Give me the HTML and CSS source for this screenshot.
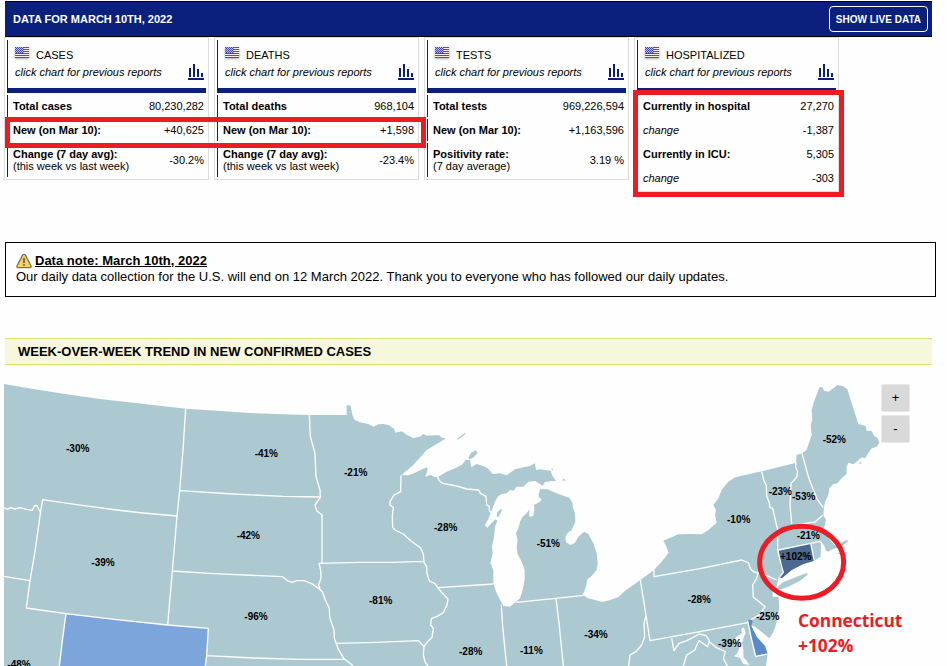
FILE: index.html
```html
<!DOCTYPE html>
<html lang="en">
<head>
<meta charset="utf-8">
<title>Data for March 10th, 2022</title>
<link rel="stylesheet" href="styles.css">
</head>
<body>
<svg class="defs" aria-hidden="true">
  <symbol id="flag" viewBox="0 0 14 11">
    <path fill="#f6eeee" d="M0 0h14v11H0z"/>
    <path stroke="#b5343a" d="M0 .5h14M0 2.5h14M0 4.5h14M0 6.5h14M0 8.500h14M0 10.500h14"/>
    <path fill="#4747a8" d="M0 0h9v7H0z"/>
    <path stroke="#b9b9e2" stroke-dasharray="1 1" d="M0 1.500h9M1 2.500h8M0 3.500h9M1 4.500h8M0 5.500h9M1 .5h8"/>
  </symbol>
  <symbol id="bars" viewBox="0 0 16 16">
    <path fill="#0b1f7c" d="M1 4h2v9H1zM5 0h2v13H5zM9 5h2v8H9zM13 9h2v4h-2zM0 14h16v2H0z"/>
  </symbol>
</svg>

<header class="topbar">
  <h1>DATA FOR MARCH 10TH, 2022</h1>
  <button type="button" class="live">SHOW LIVE DATA</button>
</header>

<main>
<section class="cards">
  <table class="card">
    <thead><tr><th colspan="2">
      <div class="name"><svg class="flag"><use href="#flag"/></svg>CASES</div>
      <div class="hint"><span>click chart for previous reports</span><svg class="bars"><use href="#bars"/></svg></div>
    </th></tr></thead>
    <tbody>
      <tr><th scope="row">Total cases</th><td>80,230,282</td></tr>
      <tr><th scope="row">New (on Mar 10):</th><td>+40,625</td></tr>
      <tr class="tall"><th scope="row">Change (7 day avg):<small>(this week vs last week)</small></th><td>-30.2%</td></tr>
    </tbody>
  </table>
  <table class="card">
    <thead><tr><th colspan="2">
      <div class="name"><svg class="flag"><use href="#flag"/></svg>DEATHS</div>
      <div class="hint"><span>click chart for previous reports</span><svg class="bars"><use href="#bars"/></svg></div>
    </th></tr></thead>
    <tbody>
      <tr><th scope="row">Total deaths</th><td>968,104</td></tr>
      <tr><th scope="row">New (on Mar 10):</th><td>+1,598</td></tr>
      <tr class="tall"><th scope="row">Change (7 day avg):<small>(this week vs last week)</small></th><td>-23.4%</td></tr>
    </tbody>
  </table>
  <table class="card">
    <thead><tr><th colspan="2">
      <div class="name"><svg class="flag"><use href="#flag"/></svg>TESTS</div>
      <div class="hint"><span>click chart for previous reports</span><svg class="bars"><use href="#bars"/></svg></div>
    </th></tr></thead>
    <tbody>
      <tr><th scope="row">Total tests</th><td>969,226,594</td></tr>
      <tr><th scope="row">New (on Mar 10):</th><td>+1,163,596</td></tr>
      <tr class="tall"><th scope="row">Positivity rate:<small>(7 day average)</small></th><td>3.19 %</td></tr>
    </tbody>
  </table>
  <table class="card">
    <thead><tr><th colspan="2">
      <div class="name"><svg class="flag"><use href="#flag"/></svg>HOSPITALIZED</div>
      <div class="hint"><span>click chart for previous reports</span><svg class="bars"><use href="#bars"/></svg></div>
    </th></tr></thead>
    <tbody>
      <tr><th scope="row">Currently in hospital</th><td>27,270</td></tr>
      <tr><th scope="row" class="delta">change</th><td>-1,387</td></tr>
      <tr><th scope="row">Currently in ICU:</th><td>5,305</td></tr>
      <tr><th scope="row" class="delta">change</th><td>-303</td></tr>
    </tbody>
  </table>
  <div class="mark mark-new"></div>
  <div class="mark mark-hospital"></div>
</section>

<section class="note">
  <h2><svg class="warn" viewBox="0 0 16 16"><path d="M8 1.300Q9 1.300 9.500 2.300L15 13Q15.500 14.700 14 14.700H2Q.5 14.700 1 13L6.500 2.300Q7 1.300 8 1.300z" fill="#fbd062" stroke="#777165" stroke-width="1.300"/><path d="M7.200 5h1.600v5H7.200zM7.200 11h1.600v1.800H7.200z" fill="#5e5a50"/></svg><span>Data note: March 10th, 2022</span></h2>
  <p>Our daily data collection for the U.S. will end on 12 March 2022. Thank you to everyone who has followed our daily updates.</p>
</section>

<h2 class="strip">WEEK-OVER-WEEK TREND IN NEW CONFIRMED CASES</h2>

<section class="map">
  <svg class="states" viewBox="0 0 2841 888" role="img" aria-label="Week-over-week trend by state">
    <g class="land">
      <path d="M12 888V42L100 57L200 73L300 87L400 98L557 116L650 122L750 129L850 133L925 135H1040V105L1052 107L1057 135L1064 150L1080 157L1105 162L1120 170L1135 163L1150 162L1165 165L1182 176L1186 188L1205 184L1222 196L1240 204L1260 200L1270 192L1280 197L1300 196L1318 196L1325 203L1338 205L1310 222L1280 240L1262 260L1240 285L1215 305L1205 316L1225 316L1245 308L1262 300L1280 292L1283 300L1276 321L1290 314L1305 322L1315 320L1340 305L1365 295L1385 285L1397 270L1410 270L1414 292L1430 282L1450 288L1463 295L1478 312L1500 310L1520 316L1545 298L1570 292L1590 288L1605 280L1608 300L1620 298L1635 300L1652 302L1656 316L1668 333L1650 334L1635 336L1628 347L1605 333L1585 335L1570 350L1550 350L1540 362L1530 360L1520 370L1505 372L1495 378L1485 395L1480 408L1472 430L1466 445L1454 466L1462 473L1478 455L1487 448L1492 452L1485 470L1482 500L1476 530L1478 550L1471 580L1480 600L1480 640L1488 665L1500 690L1510 708L1530 710L1548 695L1560 685L1568 660L1574 630L1574 600L1565 575L1552 550L1550 530L1553 510L1548 490L1555 475L1560 455L1568 440L1580 430L1588 418L1588 440L1600 438L1603 420L1602 405L1620 395L1625 388L1615 380L1620 358L1640 357L1670 370L1690 377L1708 383L1718 400L1718 410L1725 430L1726 455L1715 480L1702 490L1696 500L1698 517L1712 525L1725 518L1735 500L1752 485L1765 492L1780 520L1790 550L1793 580L1790 600L1775 618L1762 628L1758 650L1748 675L1765 685L1785 690L1808 696L1830 690L1855 682L1875 662L1900 645L1921 630L1962 600L1985 575L2006 548L1997 525L1990 512L2015 502L2035 493L2070 492L2105 493L2125 480L2150 458L2145 435L2148 420L2140 405L2155 385L2165 360L2185 335L2205 322L2285 304L2388 278L2390 255L2406 250L2420 240L2428 215L2435 195L2432 165L2437 150L2435 120L2442 95L2458 52L2468 52L2472 62L2485 65L2500 55L2512 45L2528 48L2542 58L2555 100L2575 162L2597 168L2600 182L2615 183L2622 197L2633 205L2638 218L2630 230L2615 235L2605 250L2595 265L2585 262L2578 268L2570 275L2560 283L2545 278L2540 290L2540 312L2525 325L2512 340L2500 342L2488 355L2485 375L2475 395L2472 412L2470 435L2478 450L2472 475L2475 490L2490 510L2503 525L2520 520L2538 511L2546 513L2535 522L2512 533L2498 537L2485 545L2478 542L2472 525L2463 517L2462 560L2443 572L2410 582L2375 600L2345 625L2336 620L2330 650L2318 665V680L2336 682L2338 710L2333 740L2325 775L2315 795L2308 805L2290 790L2265 770L2253 765L2270 800L2295 828L2303 852L2298 888Z"/>
      <path d="M2332 650L2350 636L2390 620L2422 608L2422 615L2400 632L2365 650L2345 657L2330 658Z"/>
      <path d="M1371 206L1395 189L1397 192L1373 209ZM1405 263L1413 248L1428 241L1433 250L1418 264L1408 267ZM1490 440L1492 426L1504 416L1506 420L1496 440ZM1653 294L1659 297L1657 302ZM1685 331L1692 326L1698 332ZM2577 280L2584 274L2582 282ZM2511 548L2522 551L2513 552Z"/>
    </g>
    <path class="rise" d="M198 733L350 749L503 765L625 775L616 888H178L188 800Z"/>
    <path class="connecticut" d="M2336 540L2432 520L2443 572L2410 582L2375 600L2345 625L2339 620L2350 607L2342 590Z"/>
    <path class="delaware" d="M2243 753L2251 747L2258 752L2254 769L2270 800L2295 828L2303 852L2267 859Z"/>
    <path class="water" d="M2232 772L2224 776L2226 790L2210 800L2200 812L2211 818L2218 835L2212 850L2202 859L2220 864L2230 882L2248 885L2240 872L2230 862V840L2226 818L2232 800L2237 788Z"/>
    <g class="borders">
      <path d="M557 116L549 240L539 362L531 438L517 603L503 765M128 389L230 404L350 420L430 429L531 438M128 389L121 430L105 545L90 632L79 714L198 731L350 749L503 765L625 775M198 731L188 805L178 888M625 775L620 857L616 888M12 413L22 418L32 413L45 417L60 413L80 418L97 421L103 408L110 406L122 428M12 619L90 632M539 362L700 372L850 379L960 381M517 603L640 611L848 620L862 632L877 637L890 632L912 632L935 641L958 657L967 665L976 690L988 715L989 742L1002 780L1003 805L1015 838L1032 866L1050 880L1060 888M620 857L760 864L900 868H1032M928 135L931 200L945 250L948 320L960 360L961 382L945 405L950 422L966 435V580M956 580L1080 577L1180 577L1270 574M957 580L962 600L963 625L956 645L960 657M1203 316L1202 365L1182 375L1170 395L1170 405L1180 412L1177 440L1178 472L1185 480L1210 492L1232 512L1262 534L1270 552L1272 578L1280 590L1281 610L1288 633L1305 641L1314 654L1326 668L1344 687L1341 705L1330 728L1310 740L1294 746L1292 765L1300 775L1296 802L1280 818L1272 830L1270 855L1276 878L1284 888M1008 820L1130 817L1255 812L1272 830M1315 653L1480 642M1312 320L1318 332L1328 340L1370 348L1400 357L1436 360L1441 370L1458 379L1460 405L1468 409L1468 422L1475 430M1504 706L1508 770L1514 830L1520 888M1548 697L1668 685L1750 676M1668 685L1678 768L1690 888M1921 630L1937 730L1950 812L2100 785L2243 758M1937 740L1932 760L1934 800L1925 825L1908 845L1890 855L1886 888M1962 600V620L2100 596L2225 570L2245 578L2252 597L2262 606L2274 608M2274 608L2270 625L2258 645L2260 682L2275 693L2295 710L2280 733L2260 745L2252 749M2274 608L2300 617L2330 630M2285 304L2291 330L2299 346L2300 378L2308 398L2310 413L2318 415L2333 480L2333 540L2345 590L2350 607L2340 620M2388 278L2387 292L2393 305L2390 322L2373 340L2370 405L2375 462M2333 480L2375 467L2445 456L2468 436M2406 250L2425 320L2450 385L2470 413M2336 540L2432 520L2460 514L2465 520M2432 520L2443 572M2243 753L2254 805L2267 859L2303 852M2015 805L2022 842L2037 820L2060 812L2078 803L2098 792L2118 797L2128 812L2123 830L2098 812L2090 825L2085 840L2060 855L2050 888M2128 815L2148 832L2176 845L2170 865L2182 888M2345 625L2331 652"/>
    </g>
    <g class="labels">
      <text x="198" y="246">-30%</text><text x="764" y="261">-41%</text><text x="1032" y="318">-21%</text>
      <text x="710" y="507">-42%</text><text x="274" y="588">-39%</text><text x="1302" y="483">-28%</text>
      <text x="1610" y="531">-51%</text><text x="733" y="750">-96%</text><text x="1107" y="702">-81%</text>
      <text x="22" y="895">-48%</text><text x="1377" y="855">-28%</text><text x="1560" y="852">-11%</text>
      <text x="1753" y="804">-34%</text><text x="2063" y="699">-28%</text><text x="2181" y="459">-10%</text>
      <text x="2306" y="375">-23%</text><text x="2376" y="390">-53%</text><text x="2468" y="219">-52%</text>
      <text x="2390" y="507">-21%</text><text x="2340" y="570">+102%</text><text x="2268" y="750">-25%</text>
      <text x="2154" y="831">-39%</text>
    </g>
    <ellipse class="ring" cx="2405" cy="577" rx="126" ry="108"/>
    <text class="callout" x="2394" y="770">Connecticut</text>
    <text class="callout" x="2394" y="846">+102%</text>
  </svg>
  <div class="zoom">
    <button type="button" aria-label="Zoom in">+</button>
    <button type="button" aria-label="Zoom out">-</button>
  </div>
</section>
</main>
</body>
</html>
```
FILE: styles.css
```css
* { box-sizing: border-box; }
body {
  margin: 0;
  background: #fefefe;
  color: #000;
  font: 11px/12px "Liberation Sans", Arial, sans-serif;
}
h1, h2, p { margin: 0; }
.defs { position: absolute; width: 0; height: 0; }

.topbar {
  display: flex;
  align-items: center;
  justify-content: space-between;
  height: 36px;
  margin: 1px 15px 0 5px;
  padding: 0 4px 0 8px;
  border: solid #000;
  border-width: 1px 0;
  background: #0b1f7c;
  color: #fff;
}
.topbar h1 { font-size: 11px; }
.live {
  height: 26px;
  padding: 0 6px;
  border: 1px solid #fff;
  border-radius: 4px;
  background: none;
  color: #fff;
  font: bold 10px "Liberation Sans", Arial, sans-serif;
}

.cards {
  position: relative;
  display: flex;
  align-items: flex-start;
  gap: 5px;
  min-height: 205px;
  padding-left: 4px;
}
.card {
  width: 205px;
  border: 1px solid #ddd;
  border-collapse: separate;
  border-spacing: 2px;
}
.card th, .card td { padding: 0 2px 0 5px; }
.card th { border-left: 1px solid #0b1f7c; text-align: left; }
.card td { padding-left: 0; text-align: right; }
.card tbody tr { height: 22px; }
.card tbody tr.tall { height: 34px; }
.card small { display: block; font-size: 11px; font-weight: normal; }
.card .delta { font-weight: normal; font-style: italic; }
.card thead th {
  height: 53px;
  padding: 6px 2px 0 7px;
  border-bottom: 5px solid #0b1f7c;
  font-weight: normal;
  vertical-align: top;
}
.name { display: flex; gap: 7px; line-height: 18px; }
.flag { width: 14px; height: 11px; margin-top: 1px; filter: drop-shadow(0 1px 1px #aaa); }
.hint { display: flex; justify-content: space-between; font-style: italic; line-height: 16px; }
.bars { width: 16px; height: 16px; }

.mark { position: absolute; border: 5px solid #ed1c24; }
.mark-new { left: 5px; top: 80px; width: 421px; height: 31px; }
.mark-hospital { left: 633px; top: 53px; width: 211px; height: 107px; }

.note {
  min-height: 55px;
  margin: 0 11px 0 5px;
  padding: 10px;
  border: 1px solid #000;
  font-size: 13px;
  line-height: 16px;
}
.note h2 { display: flex; gap: 3px; font-size: 13px; text-decoration: underline; }
.warn { width: 16px; height: 16px; }

.strip {
  margin: 41px 15px 5px 5px;
  padding: 0 13px;
  border: solid #dde070;
  border-width: 1px 0;
  background: #f7f7dc;
  font-size: 13px;
  line-height: 25px;
}

.map { position: relative; }
.states { display: block; width: 100%; height: auto; }
.land { fill: #acc9d1; }
.rise { fill: #7ca5dc; }
.delaware { fill: #5a8ac8; }
.connecticut { fill: #4a6890; }
.water { fill: #fefefe; }
.borders { fill: none; stroke: #fefefe; stroke-width: 4px; stroke-linejoin: round; }
.labels { font-size: 30px; font-weight: bold; }
.ring { fill: none; stroke: #ed1c24; stroke-width: 15px; }
.callout { fill: #ed1c24; font: bold 52px "Open Sans", "Noto Sans", sans-serif; }
.zoom {
  position: absolute;
  top: 14px;
  right: 37px;
  display: grid;
  gap: 3px;
}
.zoom button {
  width: 29px;
  height: 28px;
  padding: 0 0 2px;
  border: 1px solid #e8e8e8;
  border-radius: 2px;
  background: #d9d9d9;
  color: #000;
  font: 13px "Liberation Sans", Arial, sans-serif;
}
```
